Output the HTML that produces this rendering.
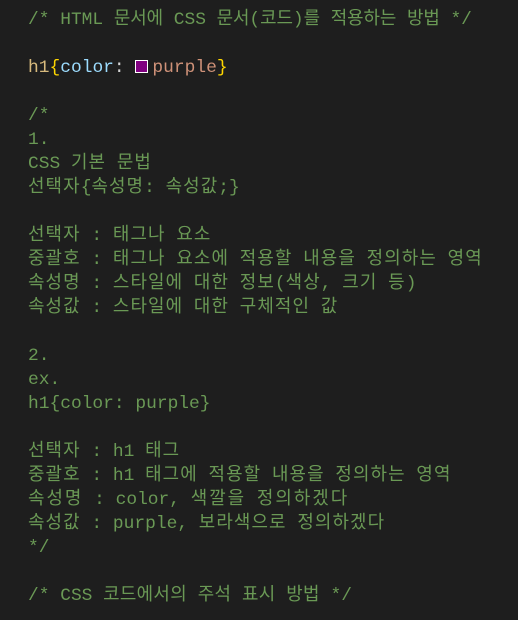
<!DOCTYPE html>
<html><head><meta charset="utf-8"><style>
html,body{margin:0;padding:0;background:#1e1e1e;width:518px;height:620px;overflow:hidden}
.c{position:absolute;left:28px;top:-16px;font-family:"Liberation Mono","Noto Sans CJK KR",monospace;font-size:17.9px;color:#6a9955}
.l{height:24px;line-height:24px;white-space:pre}
k{letter-spacing:1.1px}
.z k{letter-spacing:-0.1px}
.y k{letter-spacing:0.3px}
.x k{letter-spacing:2px}
.t{color:#d7ba7d}.b{color:#ffd700}.p{color:#9cdcfe}.w{color:#d4d4d4}.v{color:#ce9178}
.sw{display:inline-block;width:11px;height:11px;border:1px solid #fff;background:#800080;margin:0 4px 0 0;vertical-align:-1px}
</style></head><body><div class="c"><div class="l">  ...</div><div class="l z">/* HTML <k>문서에</k> CSS <k>문서</k>(<k>코드</k>)<k>를</k> <k>적용하는</k> <k>방법</k> */</div><div class="l"></div><div class="l"><span class="t">h1</span><span class="b">{</span><span class="p">color</span><span class="w">: </span><span class="sw"></span><span class="v">purple</span><span class="b">}</span></div><div class="l"></div><div class="l">/*</div><div class="l">1.</div><div class="l">CSS <k>기본</k> <k>문법</k></div><div class="l"><k>선택자</k>{<k>속성명</k>: <k>속성값</k>;}</div><div class="l"></div><div class="l"><k>선택자</k> : <k>태그나</k> <k>요소</k></div><div class="l"><k>중괄호</k> : <k>태그나</k> <k>요소에</k> <k>적용할</k> <k>내용을</k> <k>정의하는</k> <k>영역</k></div><div class="l"><k>속성명</k> : <k>스타일에</k> <k>대한</k> <k>정보</k>(<k>색상</k>, <k>크기</k> <k>등</k>)</div><div class="l"><k>속성값</k> : <k>스타일에</k> <k>대한</k> <k>구체적인</k> <k>값</k></div><div class="l"></div><div class="l">2.</div><div class="l">ex.</div><div class="l">h1{color: purple}</div><div class="l"></div><div class="l"><k>선택자</k> : h1 <k>태그</k></div><div class="l"><k>중괄호</k> : h1 <k>태그에</k> <k>적용할</k> <k>내용을</k> <k>정의하는</k> <k>영역</k></div><div class="l x"><k>속성명</k> : color, <k>색깔을</k> <k>정의하겠다</k></div><div class="l"><k>속성값</k> : purple, <k>보라색으로</k> <k>정의하겠다</k></div><div class="l">*/</div><div class="l"></div><div class="l y">/* CSS <k>코드에서의</k> <k>주석</k> <k>표시</k> <k>방법</k> */</div></div></body></html>
